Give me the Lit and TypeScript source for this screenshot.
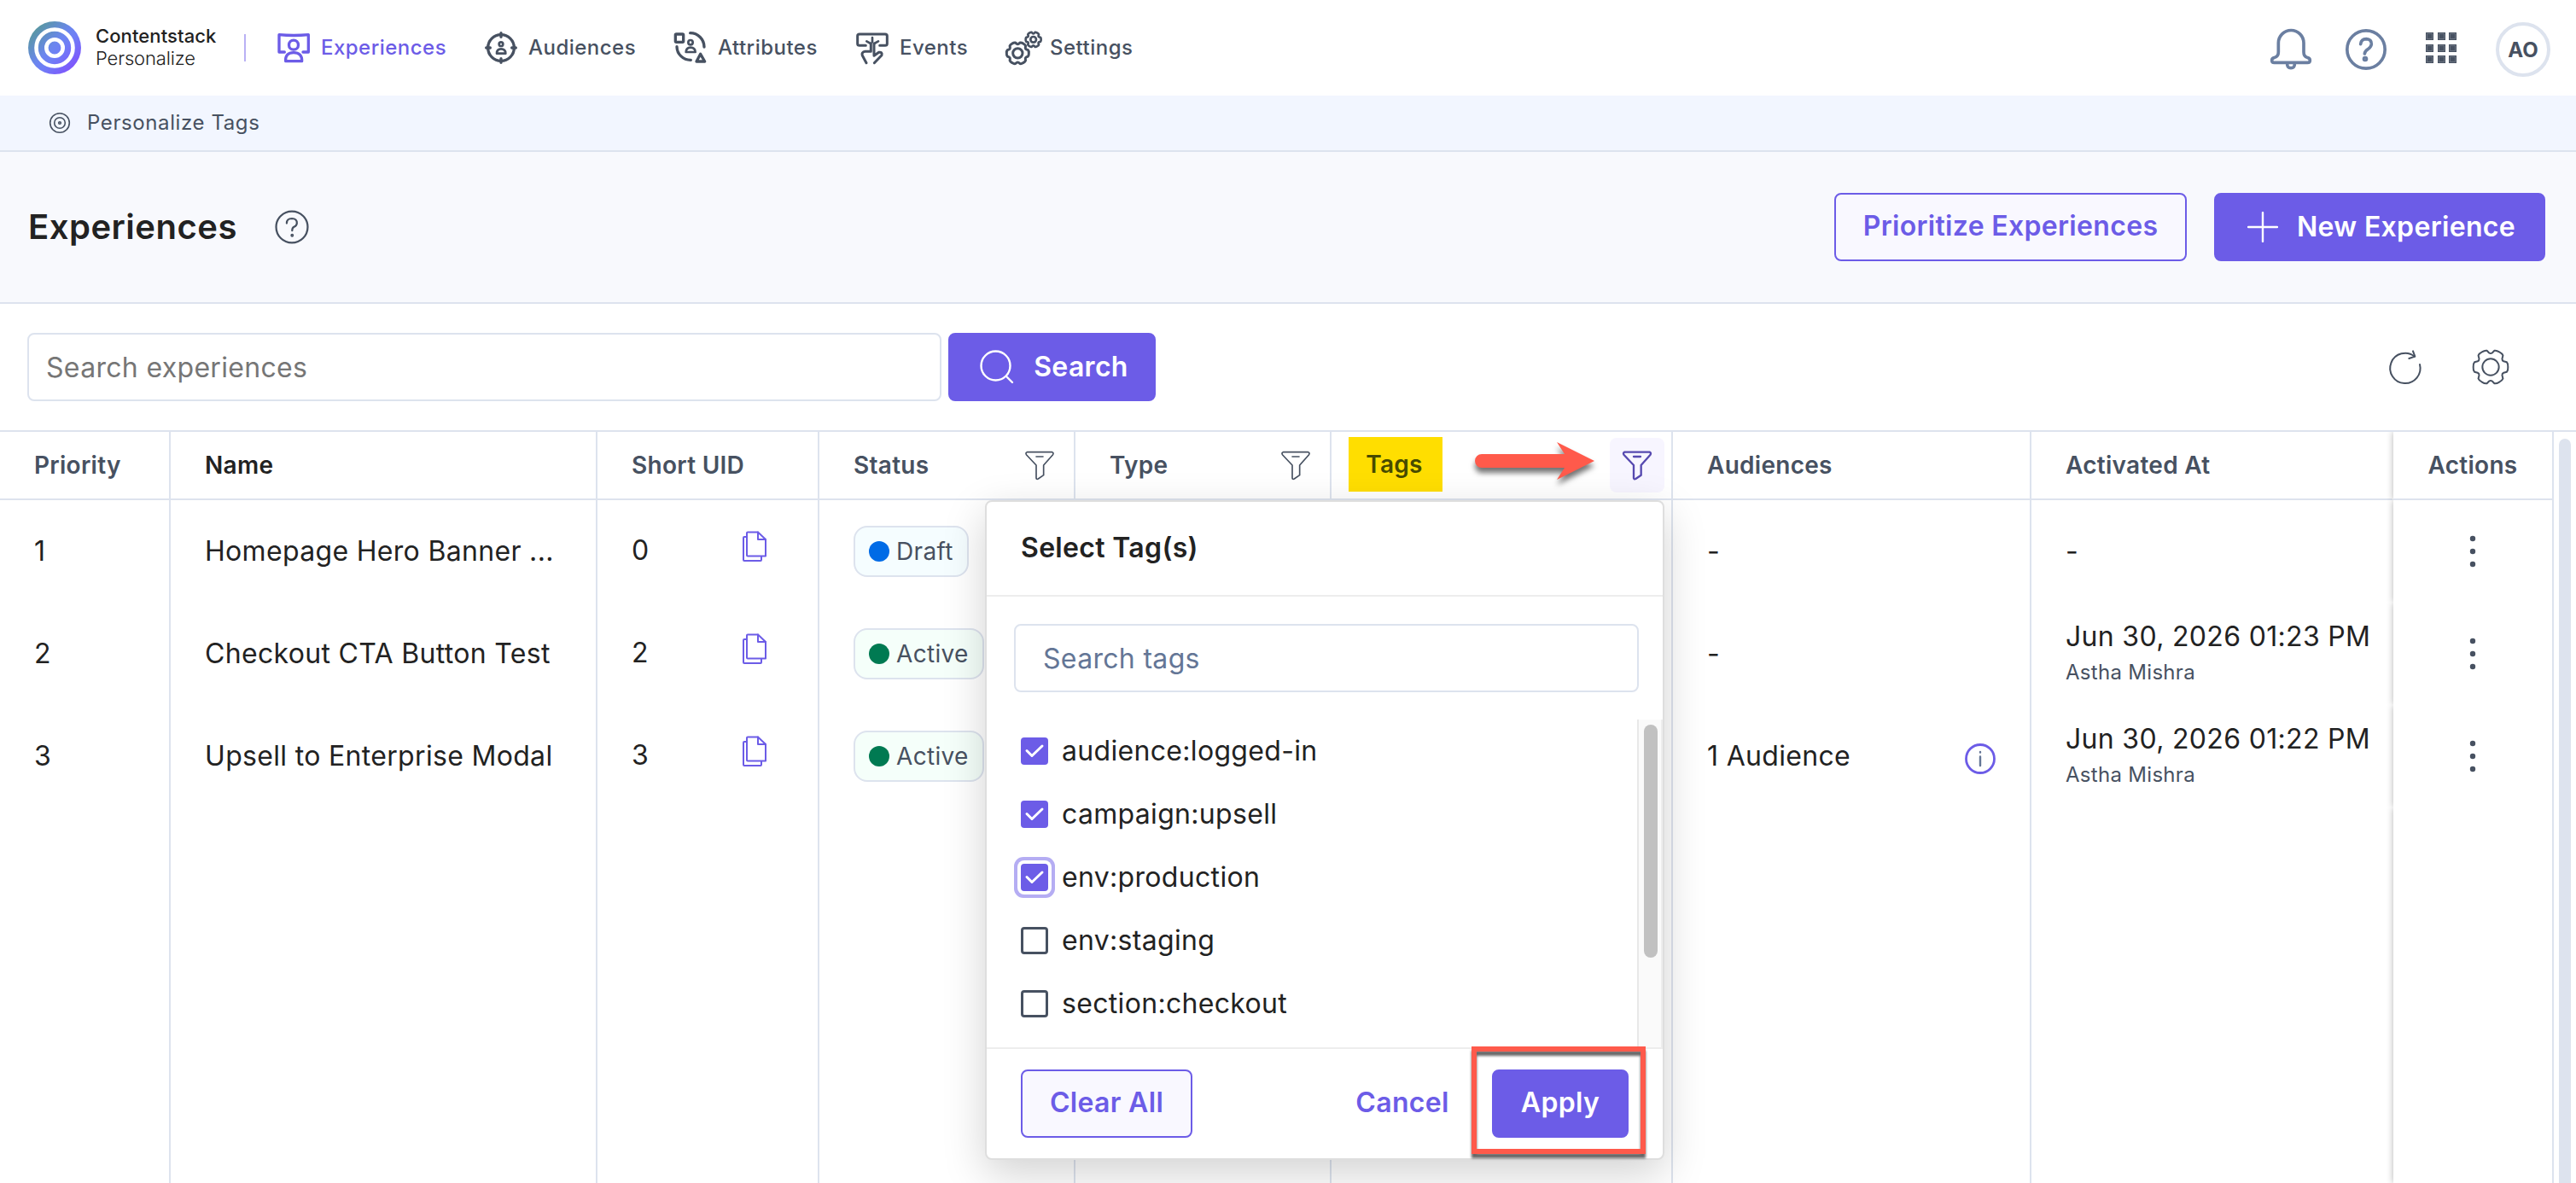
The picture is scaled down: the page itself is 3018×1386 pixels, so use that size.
import { LitElement, css, html, svg, nothing } from 'lit'
import type { SVGTemplateResult, TemplateResult } from 'lit'
import { customElement, property, state } from 'lit/decorators.js'
import { classMap } from 'lit/directives/class-map.js'

// outline of a six-toothed gear
const gear = (cx: number, cy: number, outer: number, inner: number) => {
  const at = (deg: number, r: number) => {
    const a = (deg * Math.PI) / 180
    return `${(cx + r * Math.cos(a)).toFixed(1)} ${(cy + r * Math.sin(a)).toFixed(1)}`
  }
  let d = `M${at(-17, outer * 0.97)}`
  for (let k = 0; k < 6; k++) {
    const c = k * 60
    d += `Q${at(c - 11, outer * 1.03)} ${at(c, outer)}`
    d += `Q${at(c + 11, outer * 1.03)} ${at(c + 17, outer * 0.97)}`
    d += `L${at(c + 24, inner * 1.04)}`
    d += `Q${at(c + 30, inner * 0.96)} ${at(c + 36, inner * 1.04)}`
    d += `L${at(c + 43, outer * 0.97)}`
  }
  return d + 'Z'
}

interface Icon {
  box: string
  width: number
  height: number
  stroke: number
  body: SVGTemplateResult
}

const icons: Record<string, Icon> = {
  experiences: {
    box: '42 50 120 114', width: 40, height: 38, stroke: 10,
    body: svg`
      <path d="M70 122H51V61Q102 66 154 61V122H135" />
      <circle cx="102" cy="97" r="16.5" />
      <path d="M74 154Q72 124 102 124Q132 124 131 154Z" />`,
  },
  audiences: {
    box: '774 51 114 114', width: 38, height: 38, stroke: 10,
    body: svg`
      <circle cx="831" cy="108" r="46" />
      <path d="M831 56V70M831 146V160M779 108H793M869 108H883" />
      <circle cx="831" cy="95" r="7" stroke-width="8" />
      <path d="M816 128Q816 112 831 112Q847 112 847 128Z" stroke-width="8" />`,
  },
  attributes: {
    box: '28 34 120 120', width: 40, height: 40, stroke: 10,
    body: svg`
      <rect x="35" y="46" width="28" height="28" rx="3" />
      <path d="M87 42A49 49 0 0 1 136 91M40 90A48 48 0 0 0 89 137" />
      <path d="M123 116L138 142H109Z" />
      <circle cx="88" cy="75" r="8" stroke-width="8" />
      <path d="M72 109Q73 93 88 93Q104 93 105 109Z" stroke-width="8" />`,
  },
  events: {
    box: '666 34 120 120', width: 40, height: 40, stroke: 9,
    body: svg`
      <path d="M703 86H681Q674 86 674 80V52Q674 46 681 46H771Q778 46 778 52V80Q778 86 771 86H752" />
      <path d="M726 58V74M706 71L720 79M747 71L733 79" stroke-width="8" />
      <path d="M721 79V107H701Q687 109 691 121L705 147" />
      <path d="M732 79V122L749 110Q762 108 759 120L733 147" />`,
  },
  settings: {
    box: '1186 32 138 129', width: 46, height: 43, stroke: 9,
    body: svg`
      <path d=${gear(1235, 114, 39, 32)} />
      <circle cx="1235" cy="114" r="17" />
      <path d=${gear(1290, 66, 27, 21)} stroke-width="8" />
      <circle cx="1290" cy="66" r="10" stroke-width="8" />`,
  },
  target: {
    box: '0 0 26 26', width: 26, height: 26, stroke: 1.6,
    body: svg`
      <circle cx="13" cy="13" r="11.3" />
      <circle cx="13" cy="13" r="6.3" />
      <circle cx="13" cy="13" r="1.3" />`,
  },
  bell: {
    box: '57 34 150 150', width: 50, height: 50, stroke: 11,
    body: svg`
      <path d="M88 86V118Q88 134 75 137Q65 139 65 147Q65 155 74 155H190Q199 155 199 147Q199 139 189 137Q177 134 177 118V86A44.5 44.5 0 0 0 88 86Z" />
      <path d="M119 158Q118 174 132 174Q146 174 145 158" />`,
  },
  help: {
    box: '324 42 144 144', width: 48, height: 48, stroke: 11,
    body: svg`
      <circle cx="396" cy="114" r="66.5" />
      <path d="M377 95Q379 77 397 77Q416 78 415 95Q414 105 404 112Q392 120 391 129" />
      <circle cx="393" cy="147" r="4.5" />`,
  },
  helpThin: {
    box: '324 42 144 144', width: 40, height: 40, stroke: 8,
    body: svg`
      <circle cx="396" cy="114" r="66.5" />
      <path d="M374 98Q374 78 396 78Q418 79 417 98Q416 108 405 113Q397 117 397 129" />
      <circle cx="397" cy="149" r="3" />`,
  },
  refresh: {
    box: '471 1165 126 126', width: 42, height: 42, stroke: 6,
    body: svg`
      <path d="M585 1219A53 53 0 1 1 567 1191" />
      <path d="M561 1172L568 1191L547 1198" />`,
  },
  gear: {
    box: '768 1164 132 132', width: 44, height: 44, stroke: 6,
    body: svg`
      <path d=${gear(834, 1230, 61, 48)} />
      <circle cx="834" cy="1230" r="29" />`,
  },
  filter: {
    box: '1020 80 108 108', width: 36, height: 36, stroke: 5,
    body: svg`
      <path d="M1030 88H1118Q1125 91 1120 98L1088 134V169L1069 182Q1063 185 1062 179V134L1028 98Q1023 91 1030 88Z" />
      <path d="M1062 104H1086" />`,
  },
  search: {
    box: '0 0 42 42', width: 42, height: 42, stroke: 2.4,
    body: svg`<circle cx="19.5" cy="19.5" r="17" /><path d="M32 32L39 39" />`,
  },
  plus: {
    box: '0 0 36 36', width: 36, height: 36, stroke: 2.4,
    body: svg`<path d="M18 1V35M1 18H35" />`,
  },
  copy: {
    box: '0 0 30 38', width: 30, height: 38, stroke: 2,
    body: svg`
      <path d="M7 2.5H19L28 11V30.5H7Q6 30.5 6 29.5V3.5Q6 2.5 7 2.5Z" />
      <path d="M19 2.5V11H28M6 8H3Q2 8 2 9V35Q2 36 3 36H22Q23 36 23 35V31" />`,
  },
  info: {
    box: '0 0 36 36', width: 36, height: 36, stroke: 2.8,
    body: svg`<circle cx="18" cy="18" r="16.5" /><path d="M18 15.5V26M18 10V10.5" stroke="#647696" stroke-width="2.4" />`,
  },
  dots: {
    box: '0 0 8 38', width: 8, height: 38, stroke: 0,
    body: svg`
      <g fill="currentColor">
        <circle cx="4" cy="4" r="3.2" /><circle cx="4" cy="19" r="3.2" /><circle cx="4" cy="34" r="3.2" />
      </g>`,
  },
  check: {
    box: '0 0 32 32', width: 32, height: 32, stroke: 3,
    body: svg`<path d="M7 15.5L13 21.5L25 10" />`,
  },
}

@customElement('app-icon')
export class AppIcon extends LitElement {
  @property()
  name = 'gear'

  @property({ type: Number })
  weight?: number

  render() {
    const icon = icons[this.name]
    return html`
      <svg
        width=${icon.width}
        height=${icon.height}
        viewBox=${icon.box}
        fill="none"
        stroke="currentColor"
        stroke-width=${this.weight ?? icon.stroke}
        stroke-linecap="round"
        stroke-linejoin="round"
      >${icon.body}</svg>
    `
  }

  static styles = css`
    :host {
      display: inline-flex;
      flex: none;
    }

    svg {
      display: block;
    }
  `
}

@customElement('app-topbar')
export class AppTopbar extends LitElement {
  private links = [
    { id: 'experiences', label: 'Experiences' },
    { id: 'audiences', label: 'Audiences' },
    { id: 'attributes', label: 'Attributes' },
    { id: 'events', label: 'Events' },
    { id: 'settings', label: 'Settings' },
  ]

  @state()
  private active = 'experiences'

  render() {
    return html`
      <svg class="logo" width="62" height="62" viewBox="0 0 62 62">
        <defs>
          <linearGradient id="brand" x1="0.1" y1="0.1" x2="0.9" y2="0.9">
            <stop offset="0" stop-color="#56999a" />
            <stop offset="0.45" stop-color="#6b86ee" />
            <stop offset="0.6" stop-color="#6f7ff6" />
            <stop offset="1" stop-color="#8050fd" />
          </linearGradient>
        </defs>
        <circle cx="31" cy="31" r="31" fill="url(#brand)" />
        <circle cx="31" cy="31" r="21.5" fill="none" stroke="#fff" stroke-width="4.6" />
        <circle cx="31" cy="31" r="9.7" fill="none" stroke="#fff" stroke-width="4.6" />
      </svg>
      <div class="brand">
        <span class="company">Contentstack</span>
        <span class="product">Personalize</span>
      </div>
      <nav>
        ${this.links.map(link => html`
          <a
            class=${classMap({ [link.id]: true, active: link.id === this.active })}
            @click=${() => { this.active = link.id }}
          >
            <app-icon name=${link.id}></app-icon>
            <span>${link.label}</span>
          </a>
        `)}
      </nav>
      <div class="tools">
        <app-icon class="bell" name="bell"></app-icon>
        <app-icon class="help" name="help"></app-icon>
        <div class="apps">${Array.from({ length: 9 }, () => html`<i></i>`)}</div>
        <div class="avatar">AO</div>
      </div>
    `
  }

  static styles = css`
    :host {
      display: flex;
      align-items: center;
      height: 112px;
      padding: 0 30px 0 33px;
      box-sizing: border-box;
      background: #fff;
      color: #475161;
    }

    .logo {
      margin-right: 17px;
    }

    .brand {
      display: flex;
      flex-direction: column;
      width: 174px;
      font-size: 22px;
      line-height: 26px;
      color: #212121;
      padding-bottom: 3px;
    }

    .company {
      font-weight: 500;
      letter-spacing: 0.1px;
    }

    .product {
      font-weight: 300;
      letter-spacing: -0.15px;
    }

    nav {
      display: flex;
      align-items: center;
      height: 32px;
      padding-left: 36px;
      border-left: 2px solid #b9b1f4;
    }

    a {
      display: flex;
      align-items: center;
      font-size: 24px;
      font-weight: 500;
      letter-spacing: 0.48px;
      cursor: pointer;
    }

    a span {
      padding-bottom: 2px;
    }

    a app-icon {
      margin-right: 12px;
    }

    .experiences { width: 244px; }
    .audiences { width: 221px; }
    .attributes { width: 213px; }
    .events { width: 174px; }
    .settings app-icon { margin-right: 8px; }

    .audiences app-icon { margin-right: 13px; }

    .active {
      color: #6c5ce7;
    }

    .tools {
      display: flex;
      align-items: center;
      margin-left: auto;
      padding-top: 4px;
      color: #6b7fa1;
    }

    .bell { margin-right: 39px; }
    .help { margin-right: 46px; }

    .apps {
      display: grid;
      grid-template-columns: repeat(3, 9px);
      gap: 4.5px;
      margin: 0 46px 4px 0;
    }

    .apps i {
      height: 9px;
      background: #475161;
      box-shadow: inset 0 0 0 1px #475161, inset 0 0 0 2px #68717f;
    }

    .avatar {
      display: grid;
      place-content: center;
      width: 56px;
      height: 56px;
      border: 4px solid #dde3ee;
      border-radius: 50%;
      font-size: 24px;
      font-weight: 700;
      color: #475161;
    }
  `
}

@customElement('app-button')
export class AppButton extends LitElement {
  @property()
  kind = 'primary'

  @property()
  icon = ''

  render() {
    return html`
      <button class=${classMap({ [this.kind]: true, iconic: this.icon !== '' })}>
        ${this.icon ? html`<app-icon name=${this.icon}></app-icon>` : nothing}
        <span><slot></slot></span>
      </button>
    `
  }

  static styles = css`
    :host {
      display: flex;
    }

    button {
      display: flex;
      align-items: center;
      justify-content: center;
      gap: 22px;
      flex: 1;
      height: 80px;
      padding: 0;
      border: 2px solid #6c5ce7;
      border-radius: 8px;
      font: inherit;
      font-size: 32px;
      font-weight: 600;
      letter-spacing: 0.32px;
      background: #6c5ce7;
      color: #fff;
      cursor: pointer;
    }

    span {
      padding-bottom: 3px;
    }

    .iconic {
      padding-left: 4px;
    }

    .iconic span {
      padding-bottom: 2px;
    }

    .outline {
      background: #f9f8ff;
      color: #6c5ce7;
    }

    .link {
      border-color: transparent;
      background: transparent;
      color: #6c5ce7;
    }
  `
}

@customElement('tag-filter')
export class TagFilter extends LitElement {
  @state()
  private tags = [
    { label: 'audience:logged-in', checked: true, focused: false },
    { label: 'campaign:upsell', checked: true, focused: false },
    { label: 'env:production', checked: true, focused: true },
    { label: 'env:staging', checked: false, focused: false },
    { label: 'section:checkout', checked: false, focused: false },
  ]

  render() {
    return html`
      <header>Select Tag(s)</header>
      <input placeholder="Search tags" />
      <div class="list">
        <div class="tags">
          ${this.tags.map((tag, i) => html`
            <div class="tag" @click=${() => this.toggle(i)}>
              <span class=${classMap({ box: true, checked: tag.checked, focused: tag.focused })}>
                ${tag.checked ? html`<app-icon name="check"></app-icon>` : nothing}
              </span>
              <span class="label">${tag.label}</span>
            </div>
          `)}
        </div>
        <div class="track"><div class="thumb"></div></div>
      </div>
      <footer>
        <app-button class="clear" kind="outline">Clear All</app-button>
        <app-button class="cancel" kind="link">Cancel</app-button>
        <div class="apply">
          <app-button>Apply</app-button>
          <div class="frame"></div>
        </div>
      </footer>
    `
  }

  private toggle(index: number) {
    this.tags = this.tags.map((tag, i) => ({
      ...tag,
      checked: i === index ? !tag.checked : tag.checked,
      focused: i === index,
    }))
  }

  static styles = css`
    :host {
      display: flex;
      flex-direction: column;
      width: 796px;
      height: 773px;
      box-sizing: border-box;
      border: 2px solid #dedede;
      border-radius: 8px;
      background: #fff;
      box-shadow: 0 16px 50px rgba(0, 0, 0, 0.18);
      color: #222;
      font-size: 32px;
      font-weight: 400;
      letter-spacing: 0.32px;
    }

    header {
      display: flex;
      align-items: center;
      height: 111px;
      padding: 0 40px 2px;
      box-sizing: border-box;
      border-bottom: 2px solid #ededed;
      font-weight: 600;
    }

    input {
      width: 732px;
      height: 80px;
      box-sizing: border-box;
      margin: 32px 0 32px 32px;
      padding: 0 32px;
      border: 2px solid #dde3ee;
      border-radius: 8px;
      font: inherit;
      letter-spacing: inherit;
    }

    input::placeholder {
      color: #647696;
      opacity: 1;
    }

    .list {
      display: flex;
      height: 384px;
    }

    .tags {
      flex: 1;
      overflow: hidden;
    }

    .tag {
      display: flex;
      align-items: center;
      gap: 16px;
      height: 74px;
      padding-left: 40px;
    }

    .label {
      padding-bottom: 2px;
    }

    .box {
      display: flex;
      width: 32px;
      height: 32px;
      box-sizing: border-box;
      border: 3px solid #475161;
      border-radius: 4px;
      color: #fff;
    }

    .checked {
      border: none;
      background: #6c5ce7;
    }

    .focused {
      box-shadow: 0 0 0 4px #fff, 0 0 0 8px #b5adf3;
    }

    .track {
      width: 30px;
      padding: 6px 0 0 6px;
      box-sizing: border-box;
      border-left: 2px solid #e8e8e8;
      border-right: 2px solid #ededed;
      background: #fafafa;
    }

    .thumb {
      width: 16px;
      height: 273px;
      border-radius: 8px;
      background: #c1c1c1;
    }

    footer {
      display: flex;
      align-items: center;
      flex: 1;
      padding: 0 40px;
      border-top: 2px solid #ededed;
    }

    .clear { width: 201px; }

    .cancel {
      width: 170px;
      margin: 0 20px 0 auto;
    }

    .apply {
      position: relative;
      width: 160px;
    }

    .frame {
      position: absolute;
      inset: -27px -20px -19px -24px;
      border: 6px solid #ff5a4b;
      filter: drop-shadow(0 5px 1.5px rgba(0, 0, 0, 0.6));
      pointer-events: none;
    }
  `
}

interface Experience {
  priority: number
  name: string
  uid: number
  status: 'Draft' | 'Active'
  audiences: string
  activated: string
  by: string
}

@customElement('experience-table')
export class ExperienceTable extends LitElement {
  @property({ type: Array })
  rows: Experience[] = []

  render() {
    return html`
      <div class="table">
        <div class="row head">
          <div class="cell">Priority</div>
          <div class="cell dark">Name</div>
          <div class="cell">Short UID</div>
          <div class="cell">Status<app-icon class="filter" name="filter"></app-icon></div>
          <div class="cell">Type<app-icon class="filter" name="filter"></app-icon></div>
          <div class="cell tags">
            <mark>Tags</mark>
            <svg class="arrow" width="160" height="76" viewBox="0 0 160 76">
              <path d="M16 20H113L104 6L148 28L104 50L113 36H16A8 8 0 0 1 16 20Z" fill="#ff5a4b" />
            </svg>
            <span class="toggle"><app-icon name="filter" .weight=${7}></app-icon></span>
            <tag-filter></tag-filter>
          </div>
          <div class="cell">Audiences</div>
          <div class="cell wide">Activated At</div>
          <div class="cell actions">Actions</div>
        </div>
        ${this.rows.map(row => this.renderRow(row))}
        <div class="row rest">${Array.from({ length: 9 }, (_, i) => html`
          <div class=${classMap({ cell: true, wide: i === 7, actions: i === 8 })}></div>
        `)}</div>
      </div>
      <div class="scrollbar"><div class="thumb"></div></div>
    `
  }

  private renderRow(row: Experience): TemplateResult {
    return html`
      <div class="row">
        <div class="cell text">${row.priority}</div>
        <div class="cell text">${row.name}</div>
        <div class="cell uid">${row.uid}<app-icon name="copy"></app-icon></div>
        <div class="cell">
          <span class="chip ${row.status.toLowerCase()}"><i></i>${row.status}</span>
        </div>
        <div class="cell"></div>
        <div class="cell"></div>
        <div class="cell text audience">
          ${row.audiences}
          ${row.audiences !== '-' ? html`<app-icon name="info"></app-icon>` : nothing}
        </div>
        <div class="cell wide">
          <div class="when">
            <span>${row.activated}</span>
            ${row.by ? html`<small>${row.by}</small>` : nothing}
          </div>
        </div>
        <div class="cell actions"><app-icon name="dots"></app-icon></div>
      </div>
    `
  }

  static styles = css`
    :host {
      display: flex;
      flex: 1;
      min-height: 0;
      border-top: 2px solid #dde3ee;
      color: #222;
      font-size: 32px;
      letter-spacing: 0.32px;
    }

    .table {
      display: flex;
      flex-direction: column;
      width: 2992px;
    }

    .row {
      display: grid;
      grid-template-columns: 200px 500px 260px 300px 300px 400px 420px 424px 188px;
      height: 120px;
    }

    .rest {
      flex: 1;
      height: auto;
    }

    .cell {
      display: flex;
      align-items: center;
      padding: 0 24px 0 40px;
      border-right: 2px solid #dde3ee;
      white-space: nowrap;
      min-width: 0;
    }

    .text {
      padding-bottom: 2px;
    }

    .wide {
      border-right-color: transparent;
    }

    .head {
      position: relative;
      z-index: 1;
      height: 80px;
      font-size: 28px;
      font-weight: 600;
      letter-spacing: 0.28px;
      color: #475161;
    }

    .head .cell {
      border-bottom: 2px solid #dde3ee;
    }

    .dark {
      color: #222;
    }

    .filter {
      margin: 0 -2px 0 auto;
    }

    .head .tags {
      position: relative;
      padding: 0 8px 0 20px;
    }

    mark {
      display: grid;
      place-content: center;
      width: 110px;
      height: 64px;
      padding-right: 3px;
      box-sizing: border-box;
      margin-bottom: 2px;
      background: #ffde00;
      color: #474a00;
    }

    .arrow {
      position: absolute;
      left: 160px;
      top: 6px;
      filter: drop-shadow(0 6px 3px rgba(0, 0, 0, 0.55));
    }

    .toggle {
      display: grid;
      place-content: center;
      width: 64px;
      height: 64px;
      margin-left: auto;
      border-radius: 8px;
      background: #f7f5ff;
      color: #5649b0;
    }

    tag-filter {
      position: absolute;
      right: 8px;
      top: 80px;
    }

    .actions {
      justify-content: center;
      padding: 0;
      background: #fff;
      color: #475161;
      box-shadow: 0 0 8px rgba(0, 0, 0, 0.3);
      clip-path: inset(0 0 0 -12px);
    }

    .uid {
      padding-bottom: 4px;
    }

    .uid app-icon {
      margin: 0 35px 8px auto;
      color: #6c5ce7;
    }

    .chip {
      display: flex;
      align-items: center;
      gap: 8px;
      height: 60px;
      padding: 0 16px;
      box-sizing: border-box;
      border: 2px solid #dde3ee;
      border-radius: 16px;
      font-size: 28px;
      color: #475161;
      background: #f5fdff;
    }

    .chip i {
      width: 24px;
      height: 24px;
      border-radius: 50%;
      background: #006be6;
    }

    .active {
      background: #f5fffa;
    }

    .active i {
      background: #007a52;
    }

    .audience app-icon {
      margin: 8px 16px 0 auto;
      color: #6c5ce7;
    }

    .when {
      display: flex;
      flex-direction: column;
      line-height: 44px;
    }

    small {
      font-size: 24px;
      line-height: 40px;
      letter-spacing: 0.3px;
      color: #475161;
    }

    .scrollbar {
      padding: 8px 6px 0;
    }

    .thumb {
      width: 14px;
      height: 100%;
      border-radius: 7px 7px 0 0;
      background: #dde3ee;
    }
  `
}

@customElement('app-root')
export class AppRoot extends LitElement {
  private rows: Experience[] = [
    { priority: 1, name: 'Homepage Hero Banner ...', uid: 0, status: 'Draft', audiences: '-', activated: '-', by: '' },
    { priority: 2, name: 'Checkout CTA Button Test', uid: 2, status: 'Active', audiences: '-', activated: 'Jun 30, 2026 01:23 PM', by: 'Astha Mishra' },
    { priority: 3, name: 'Upsell to Enterprise Modal', uid: 3, status: 'Active', audiences: '1 Audience', activated: 'Jun 30, 2026 01:22 PM', by: 'Astha Mishra' },
  ]

  render() {
    return html`
      <app-topbar></app-topbar>
      <div class="crumbs"><app-icon name="target"></app-icon><span>Personalize Tags</span></div>
      <div class="title">
        <h1>Experiences</h1>
        <app-icon name="helpThin"></app-icon>
        <app-button class="prioritize" kind="outline">Prioritize Experiences</app-button>
        <app-button class="new" icon="plus">New Experience</app-button>
      </div>
      <div class="toolbar">
        <input placeholder="Search experiences" />
        <app-button class="search" icon="search">Search</app-button>
        <app-icon class="refresh" name="refresh"></app-icon>
        <app-icon name="gear"></app-icon>
      </div>
      <experience-table .rows=${this.rows}></experience-table>
    `
  }

  static styles = css`
    :host {
      display: flex;
      flex-direction: column;
      height: 1386px;
      overflow: hidden;
      background: #fff;
      font-family: Inter, "Liberation Sans", sans-serif;
    }

    .crumbs {
      display: flex;
      align-items: center;
      gap: 19px;
      height: 64px;
      padding-left: 57px;
      border-bottom: 2px solid #dde3ee;
      background: #f2f6ff;
      color: #475161;
      font-size: 24px;
      letter-spacing: 0.6px;
    }

    .crumbs span {
      padding-bottom: 1px;
    }

    .title {
      display: flex;
      align-items: center;
      height: 176px;
      padding: 0 36px 0 33px;
      border-bottom: 2px solid #dde3ee;
      background: #f8f9fd;
      color: #475161;
    }

    h1 {
      width: 289px;
      margin: 0;
      padding-bottom: 2px;
      font-size: 40px;
      font-weight: 600;
      letter-spacing: 0.5px;
      color: #222;
    }

    .prioritize {
      width: 413px;
      margin: 0 32px 0 auto;
    }

    .new {
      width: 388px;
    }

    .toolbar {
      display: flex;
      align-items: center;
      height: 148px;
      padding: 0 78px 0 32px;
      color: #475161;
    }

    input {
      width: 1071px;
      height: 80px;
      box-sizing: border-box;
      margin: 0 8px 0 0;
      padding: 0 20px;
      border: 2px solid #dde3ee;
      border-radius: 8px;
      font: inherit;
      font-size: 32px;
      letter-spacing: 0.32px;
    }

    input::placeholder {
      color: #767676;
      opacity: 1;
    }

    .search {
      width: 243px;
    }

    .refresh {
      margin: 0 57px 0 auto;
    }
  `
}
